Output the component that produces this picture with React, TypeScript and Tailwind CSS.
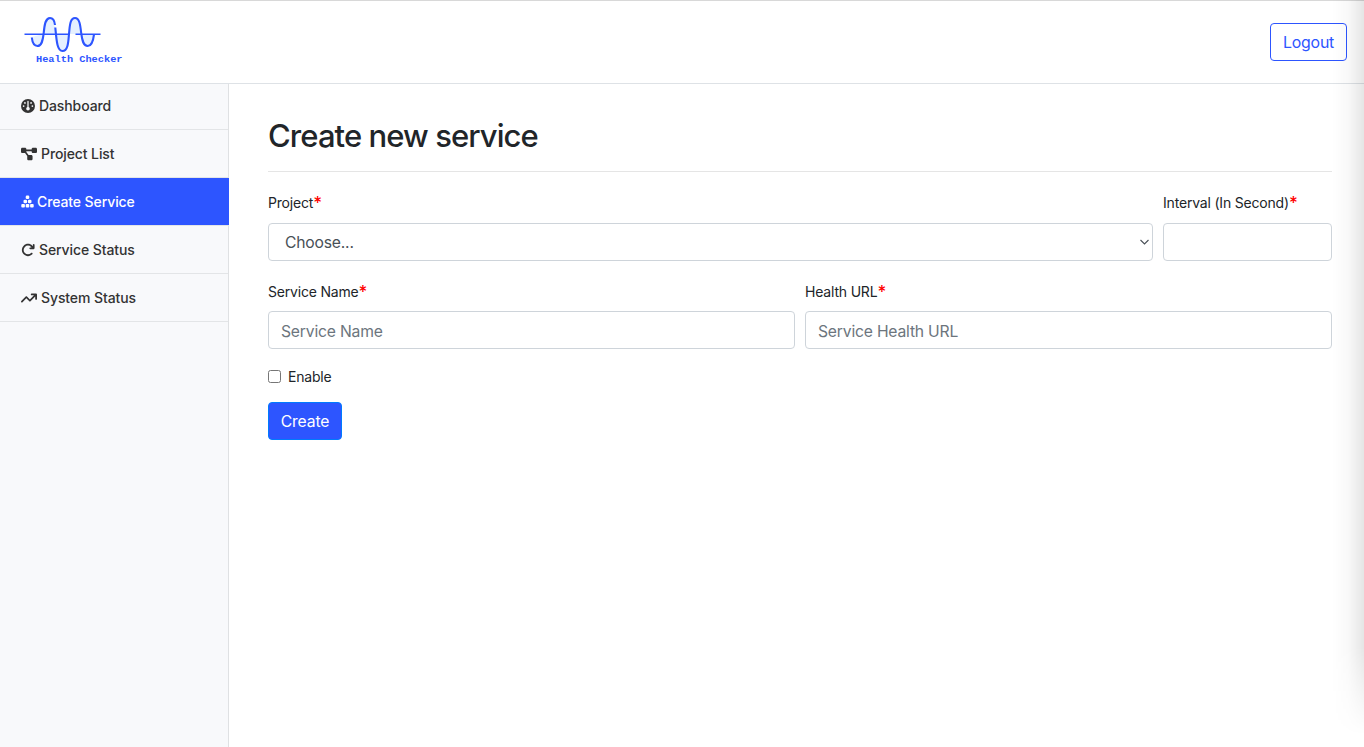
import React from 'react';
import { FaGauge, FaDiagramProject, FaArrowRotateRight, FaArrowTrendUp } from 'react-icons/fa6';

function BlocksIcon() {
  return (
    <svg width="13" height="13" viewBox="0 0 13 13" fill="currentColor">
      <rect x="4.7" y="0.6" width="3.6" height="3.4" rx="1.3" />
      <rect x="2.5" y="4.8" width="3.6" height="3.4" rx="1.3" />
      <rect x="6.9" y="4.8" width="3.6" height="3.4" rx="1.3" />
      <rect x="0.3" y="9" width="3.6" height="3.5" rx="0.9" />
      <rect x="4.7" y="9" width="3.6" height="3.5" rx="0.9" />
      <rect x="9.1" y="9" width="3.6" height="3.5" rx="0.9" />
    </svg>
  );
}

function Logo() {
  return (
    <svg width="104" height="52" viewBox="24 14 104 52" className="block" fill="none">
      <path d="M43.5 34C44.5 24 46 18 50 18C54 18 55 28 56 34ZM56 34C57 46 59 51 62.5 51C66 51 68 44 69 34ZM69 34C70 24 71 18 75 18C79 18 80 26 81.5 34ZM32 37C33 43 34.5 46 37.5 46C41 46 43 42 43.5 34ZM81.5 34C82.5 42 84 46 87.5 46C91 46 93 42 93.8 34Z" fill="#e5f0ff" />
      <path d="M31.8 37.5C32.3 42 34 46 37.5 46C41.5 46 42.8 41 43.7 33C44.5 24 45.6 18 50 18C53.5 18 54.6 21 55 25M55.3 27.5C56.5 40 57 51 62.5 51C68 51 68.3 42 69 34C69.8 24 70.5 18 75 18C79.5 18 80.3 25 81.2 33C82.2 41 83.5 46 87.7 46C91.7 46 93.2 41 94 34.5" stroke="#2d55ff" strokeWidth="2.1" />
      <path d="M24.5 34.3H69M75.5 34.3H100.5" stroke="#2d55ff" strokeWidth="1.5" />
      <text x="36" y="62.2" fill="#2d55ff" fontFamily="'Liberation Mono', monospace" fontWeight="700" fontSize="9.8" textLength="86.5" lengthAdjust="spacingAndGlyphs">Health Checker</text>
    </svg>
  );
}

const items = [
  { label: 'Dashboard', icon: <FaGauge size={14} />, gap: 'gap-[4px]' },
  { label: 'Project List', icon: <FaDiagramProject size={16} />, gap: 'gap-[4px]' },
  { label: 'Create Service', icon: <BlocksIcon />, gap: 'gap-[3px]', active: true },
  { label: 'Service Status', icon: <FaArrowRotateRight size={14} />, gap: 'gap-[4px]' },
  { label: 'System Status', icon: <FaArrowTrendUp size={16} />, gap: 'gap-[4px]' },
];

function Label({ children, required }: { children: React.ReactNode; required?: boolean }) {
  return (
    <span className="flex h-[21px] items-center whitespace-nowrap text-[14px] tracking-[-0.19px] text-[#212529]">
      {children}
      {required && <span className="pt-[1px] text-[17px] font-medium leading-none text-[#ff0000]">*</span>}
    </span>
  );
}

const field = 'h-[38px] w-full rounded-[4px] border border-[#ced4da] bg-white pt-[2px] text-[15.7px] tracking-[-0.2px] text-[#495057] outline-none';

export default function App() {
  return (
    <div className="relative flex h-[747px] w-full flex-col overflow-hidden bg-white font-['Inter',sans-serif] text-[#212529]">
      <header className="flex h-[84px] shrink-0 items-start justify-between border-b border-t border-b-[#dee2e6] border-t-[#d8d8d8] pl-6 pr-[17px]">
        <div className="pt-[13px]"><Logo /></div>
        <button className="mt-[22px] h-[38px] w-[77px] rounded-[4px] border border-[#2d55ff] pt-[2px] text-[15.9px] tracking-[-0.2px] text-[#2d55ff]">Logout</button>
      </header>
      <div className="flex min-h-0 flex-1">
        <nav className="w-[229px] shrink-0 border-r border-[#dfe1e3] bg-[#f8f9fb]">
          {items.map((item) => (
            <div
              key={item.label}
              className={`flex h-12 items-center pl-[21px] text-[14px] font-medium tracking-[-0.1px] ${item.gap} ${item.active ? '-mr-px border-b border-[#e3e5e7] bg-[#2d55ff] bg-clip-padding text-white' : 'border-b border-[#e3e5e7] text-[#333]'} first:h-[46px] first:pb-[2px]`}
            >
              {item.icon}
              <span>{item.label}</span>
            </div>
          ))}
        </nav>
        <main className="flex-1 pl-[39px] pr-8">
          <h1 className="mt-[32px] h-[40px] text-[31px] font-[540] leading-[40px] tracking-[-0.92px]">Create new service</h1>
          <hr className="mt-[15px] border-[#e5e5e5]" />
          <form className="mt-[20px]" onSubmit={(e) => e.preventDefault()}>
            <div className="flex gap-[10px]">
              <label className="flex w-[885px] flex-col gap-[10px]">
                <Label required>Project</Label>
                <span className="relative block">
                  <select className={`${field} appearance-none pl-[16px]`}>
                    <option>Choose...</option>
                  </select>
                  <svg className="pointer-events-none absolute right-[4px] top-[16px]" width="9" height="7" viewBox="0 0 9 7" fill="none" stroke="#495057" strokeWidth="1.1">
                    <path d="M0.5 1L4.5 5L8.5 1" />
                  </svg>
                </span>
              </label>
              <label className="flex flex-1 flex-col gap-[10px]">
                <Label required>Interval (In Second)</Label>
                <input className={`${field} px-3`} />
              </label>
            </div>
            <div className="mt-[20px] flex gap-[10px]">
              <label className="flex flex-1 flex-col gap-[9px]">
                <Label required>Service Name</Label>
                <input className={`${field} px-3 placeholder:text-[#6c757d]`} placeholder="Service Name" />
              </label>
              <label className="flex flex-1 flex-col gap-[9px]">
                <Label required>Health URL</Label>
                <input className={`${field} px-3 placeholder:text-[#6c757d]`} placeholder="Service Health URL" />
              </label>
            </div>
            <label className="mt-[17px] flex h-[21px] items-center gap-[7px]">
              <input type="checkbox" className="h-[13px] w-[13px] appearance-none rounded-[2.5px] border border-[#767676] bg-white" />
              <Label>Enable</Label>
            </label>
            <button className="mt-[15px] h-[38px] w-[74px] rounded-[4px] border border-[#007bff] bg-[#2d55ff] pt-[2px] text-[15.7px] tracking-[-0.1px] text-white">Create</button>
          </form>
        </main>
      </div>
      <div className="pointer-events-none absolute right-0 top-0 h-[735px] w-[32px] bg-gradient-to-r from-transparent via-black/[0.025] to-black/[0.1] [mask-image:linear-gradient(to_bottom,black_88%,transparent)]" />
    </div>
  );
}
